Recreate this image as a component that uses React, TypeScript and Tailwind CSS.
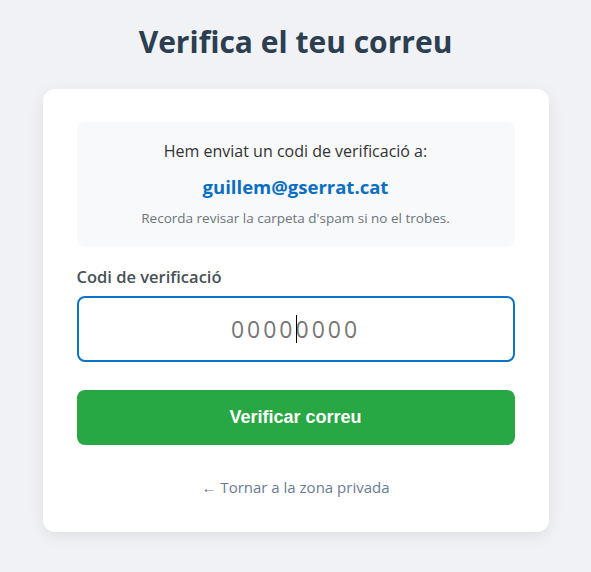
import React from "react";

const VerifyEmailPage = () => {
  return (
    <div className="min-h-screen bg-[#f0f2f5] flex flex-col items-center pt-[22px] font-['Open_Sans',sans-serif]">
      <h1 className="text-[30px] font-bold text-[#2c3e50] leading-[40px] mb-[27px]">
        Verifica el teu correu
      </h1>

      <div className="w-[506px] bg-white rounded-xl shadow-[0_4px_16px_rgba(0,0,0,0.08)] px-[34px] pt-[33px] pb-[34px]">
        {/* Info box */}
        <div className="bg-[#f8f9fa] rounded-lg flex flex-col items-center pt-[18px] pb-[19px]">
          <p className="text-[16px] text-[#333] leading-[23px]">Hem enviat un codi de verificació a:</p>
          <p className="text-[18.5px] font-bold text-[#0a6fc2] leading-[26px] mt-[11px]">guillem@gserrat.cat</p>
          <p className="text-[13.5px] text-[#6c757d] leading-[19px] mt-[9px]">
            Recorda revisar la carpeta d'spam si no el trobes.
          </p>
        </div>

        {/* Code field */}
        <label className="block text-[16.5px] font-semibold text-[#495057] mt-[19px] mb-[8px] leading-[22px]">
          Codi de verificació
        </label>
        <div className="relative">
          <input
            type="text"
            placeholder="00000000"
            className="w-full h-[66px] border-2 border-[#0a74c8] rounded-lg text-center text-[23px] tracking-[3px] text-[#333] placeholder:text-[#777] outline-none"
          />
          <span className="absolute left-1/2 top-[19px] w-px h-[28px] bg-black" />
        </div>

        <button className="w-full h-[55px] mt-[28px] bg-[#28a745] rounded-lg text-white text-[18px] font-bold font-['Liberation_Sans',Arial,sans-serif]">
          Verificar correu
        </button>

        <div className="flex justify-center mt-[31px]">
          <a href="#" className="text-[15px] text-[#6b7c93] leading-[22px]">
            ← Tornar a la zona privada
          </a>
        </div>
      </div>
    </div>
  );
};

export default function App() {
  return <VerifyEmailPage />;
}
